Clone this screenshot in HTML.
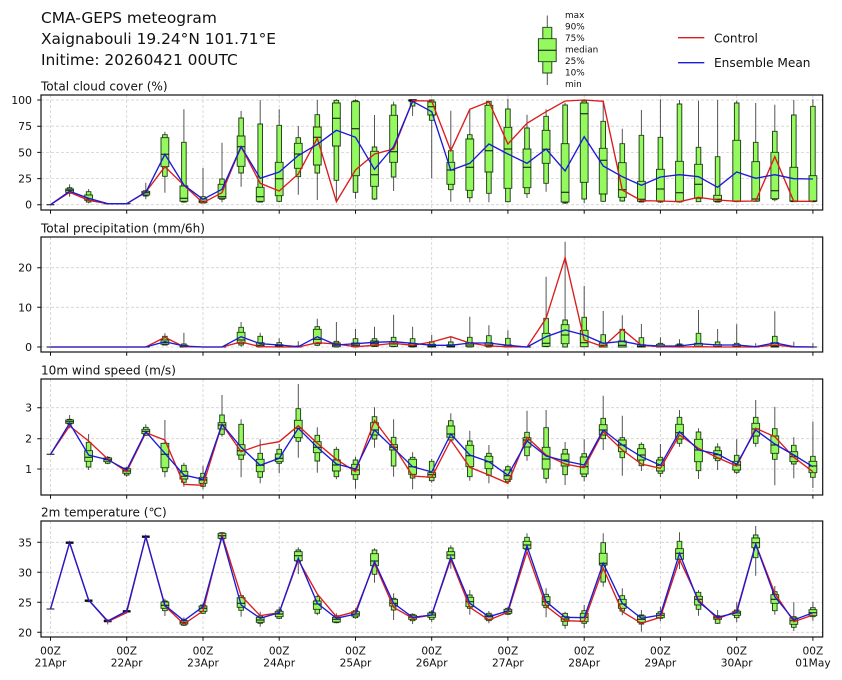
<!DOCTYPE html>
<html><head><meta charset="utf-8"><title>CMA-GEPS meteogram</title>
<style>
html,body{margin:0;padding:0;background:#fff;width:842px;height:680px;overflow:hidden}
svg{display:block}
text{font-family:"DejaVu Sans","Liberation Sans",sans-serif;fill:#111}
.g{stroke:#d0d0d0;stroke-width:.8;stroke-dasharray:3 2;fill:none}
.w{stroke:#2a2a2a;stroke-width:1;fill:none;stroke-opacity:.8}
.b{fill:#94f85f;stroke:#12280a;stroke-width:.95;stroke-opacity:.9}
.m{stroke:#0c0c0c;stroke-width:1;fill:none}
.k{stroke:#0c0c0c;stroke-width:2.4;fill:none}
.r{stroke:#dc1c1c;stroke-width:1.35;fill:none}
.l{stroke:#1a1ad8;stroke-width:1.35;fill:none}
.f{fill:none;stroke:#111;stroke-width:1.2}
.t{stroke:#111;stroke-width:1;fill:none}
.yl{font-size:10.9px;text-anchor:end}
.xl{font-size:10.6px;text-anchor:middle}
.pt{font-size:12.05px}
.mt{font-size:15.4px}
.sl{font-size:8.9px}
.lg{font-size:12.15px}
</style></head><body>
<svg width="842" height="680" viewBox="0 0 842 680" xmlns="http://www.w3.org/2000/svg">
<text class="mt" x="41" y="23">CMA-GEPS meteogram</text>
<text class="mt" x="41" y="44">Xaignabouli 19.24°N 101.71°E</text>
<text class="mt" x="41" y="65">Initime: 20260421 00UTC</text>

<!-- legend box -->
<path class="w" d="M547.3 15.5V85"/>
<path class="b" d="M542.8 27.3h9V73h-9z"/>
<path class="b" d="M538.4 38.7h17.8V61.7h-17.8z"/>
<path class="m" d="M538.4 50.3h17.8"/>
<text class="sl" x="565" y="18.2">max</text>
<text class="sl" x="565" y="29.7">90%</text>
<text class="sl" x="565" y="41.2">75%</text>
<text class="sl" x="565" y="52.7">median</text>
<text class="sl" x="565" y="64.2">25%</text>
<text class="sl" x="565" y="75.7">10%</text>
<text class="sl" x="565" y="87.2">min</text>
<path class="r" d="M678 37.7h26.3"/>
<path class="l" d="M678 62.7h26.3"/>
<text class="lg" x="714" y="42.3">Control</text>
<text class="lg" x="714" y="67">Ensemble Mean</text>

<!-- Panel 1 -->
<text class="pt" x="41" y="90.5">Total cloud cover (%)</text>
<path class="g" d="M50.5 95V210M126.7 95V210M203 95V210M279.2 95V210M355.5 95V210M431.7 95V210M507.9 95V210M584.2 95V210M660.4 95V210M736.7 95V210M812.9 95V210M41 204.7H823M41 178.6H823M41 152.4H823M41 126.2H823M41 100H823"/>
<path class="w" d="M69.6 184.3V196.7M88.6 189V203.3M145.8 182.7V199.3M164.9 131.7V192.7M183.9 109.3V202.7M203 168V203.3M222 142.7V202.3M241.1 111V186.7M260.2 100V202M279.2 109.3V202M298.3 126V194.7M317.3 100V200M336.4 99.3V200M355.5 99.3V198.7M374.5 115V200M393.6 101.7V191M412.6 100V116M431.7 99.3V178.3M450.8 110.7V201.7M469.8 110V202.3M488.9 100.7V202.3M507.9 98.7V202.3M527 114.7V198M546.1 109.3V191.7M565.1 102.7V204M584.2 99.3V203.3M603.2 100.7V201.7M622.3 128.7V201.7M641.4 110V202.3M660.4 99.3V202.7M679.5 100V202.7M698.5 100.7V202M717.6 100V202.3M736.7 100.7V202M755.7 103V201.7M774.8 104.7V201.3M793.8 100V202M812.9 99.3V202"/>
<path class="b" d="M67.3 187.7h4.6V193.3h-4.6zM86.3 191.7h4.6V202h-4.6zM143.5 190.7h4.6V196h-4.6zM162.6 134.7h4.6V176.3h-4.6zM181.6 142.3h4.6V202h-4.6zM200.7 196.7h4.6V203h-4.6zM219.7 179h4.6V199.3h-4.6zM238.8 118h4.6V173h-4.6zM257.9 124h4.6V202h-4.6zM276.9 125.3h4.6V201.3h-4.6zM296 137.7h4.6V176.7h-4.6zM315 114.7h4.6V173h-4.6zM334.1 100.3h4.6V180.3h-4.6zM353.2 100.7h4.6V192.3h-4.6zM372.2 147h4.6V199h-4.6zM391.3 105h4.6V177h-4.6zM410.3 100h4.6V106h-4.6zM429.4 100h4.6V120.3h-4.6zM448.5 150.7h4.6V189.7h-4.6zM467.5 134.7h4.6V197.7h-4.6zM486.6 101.3h4.6V193.3h-4.6zM505.6 109h4.6V201.7h-4.6zM524.7 128h4.6V193.7h-4.6zM543.8 116.3h4.6V183.3h-4.6zM562.8 105h4.6V203h-4.6zM581.9 101h4.6V199h-4.6zM600.9 121.3h4.6V201.3h-4.6zM620 143.7h4.6V201h-4.6zM639.1 135.3h4.6V202h-4.6zM658.1 137.3h4.6V202h-4.6zM677.2 104h4.6V202h-4.6zM696.2 147.3h4.6V201.7h-4.6zM715.3 156.7h4.6V202h-4.6zM734.4 103h4.6V201.7h-4.6zM753.4 142.3h4.6V201.3h-4.6zM772.5 131.3h4.6V199.7h-4.6zM791.5 115h4.6V201.7h-4.6zM810.6 106.3h4.6V201.7h-4.6z"/>
<path class="b" d="M65.7 189h7.8V192.3h-7.8zM84.7 195h7.8V200.3h-7.8zM141.9 191.3h7.8V195h-7.8zM161 137.7h7.8V166.7h-7.8zM180 186h7.8V201.3h-7.8zM199.1 199h7.8V202.7h-7.8zM218.1 184.3h7.8V198.3h-7.8zM237.2 136h7.8V166.3h-7.8zM256.3 187.3h7.8V201.3h-7.8zM275.3 162.3h7.8V195.7h-7.8zM294.4 143.3h7.8V168.3h-7.8zM313.4 127h7.8V165h-7.8zM332.5 103h7.8V146h-7.8zM351.6 101.7h7.8V175.7h-7.8zM370.6 151.3h7.8V186.3h-7.8zM389.7 115.3h7.8V162.3h-7.8zM408.7 100h7.8V101h-7.8zM427.8 102h7.8V115h-7.8zM446.9 162.3h7.8V184.3h-7.8zM465.9 139h7.8V190.3h-7.8zM485 105.3h7.8V172h-7.8zM504 127.3h7.8V188.3h-7.8zM523.1 149h7.8V187.7h-7.8zM542.2 130.3h7.8V163.3h-7.8zM561.2 143.7h7.8V202h-7.8zM580.3 103h7.8V182.3h-7.8zM599.3 148.3h7.8V194h-7.8zM618.4 162.7h7.8V197.3h-7.8zM637.5 181.3h7.8V201.3h-7.8zM656.5 169.3h7.8V201.3h-7.8zM675.6 161.3h7.8V201.3h-7.8zM694.6 164.3h7.8V198.3h-7.8zM713.7 195.3h7.8V201.3h-7.8zM732.8 140.3h7.8V201.3h-7.8zM751.8 161.7h7.8V201h-7.8zM770.9 152.3h7.8V198.7h-7.8zM789.9 167.3h7.8V201.3h-7.8zM809 175.7h7.8V201.3h-7.8z"/>
<path class="m" d="M46.6 204.7h7.8M65.7 190.3h7.8M84.7 199h7.8M103.8 203.7h7.8M122.8 203.7h7.8M141.9 192.7h7.8M161 154.3h7.8M180 198.3h7.8M199.1 201.3h7.8M218.1 196.7h7.8M237.2 146.7h7.8M256.3 196.7h7.8M275.3 178.7h7.8M294.4 154h7.8M313.4 137.3h7.8M332.5 118.3h7.8M351.6 128.7h7.8M370.6 174.7h7.8M389.7 151.7h7.8M408.7 100.3h7.8M427.8 106.7h7.8M446.9 170h7.8M465.9 167.3h7.8M485 150.7h7.8M504 149h7.8M523.1 167.3h7.8M542.2 149.3h7.8M561.2 192.3h7.8M580.3 113.7h7.8M599.3 160.3h7.8M618.4 189.7h7.8M637.5 199.3h7.8M656.5 189h7.8M675.6 192.7h7.8M694.6 184.3h7.8M713.7 199.3h7.8M732.8 201h7.8M751.8 199h7.8M770.9 190.7h7.8M789.9 201h7.8M809 201h7.8"/>
<path class="k" d="M408.7 100.4h7.8"/>
<polyline class="r" points="50.5,204.7 69.6,192.3 88.6,200.3 107.7,203.7 126.7,203.7 145.8,192 164.9,166.7 183.9,185.3 203,202.7 222,192.7 241.1,146.7 260.2,183.3 279.2,191 298.3,174 317.3,138.3 336.4,201.7 355.5,170 374.5,154 393.6,149 412.6,100.7 431.7,101 450.8,150.7 469.8,109.3 488.9,101.7 507.9,144 527,123.3 546.1,111.7 565.1,101 584.2,100 603.2,101.3 622.3,190 641.4,200.7 660.4,201 679.5,201.7 698.5,197.3 717.6,200 736.7,201.3 755.7,201 774.8,156.7 793.8,201.3 812.9,201.3"/>
<polyline class="l" points="50.5,204.7 69.6,191.3 88.6,198.3 107.7,203.7 126.7,203.7 145.8,192.3 164.9,154.3 183.9,185 203,199.3 222,189.3 241.1,146.7 260.2,178.3 279.2,172 298.3,155.5 317.3,144.3 336.4,130.3 355.5,137.3 374.5,169.3 393.6,146.7 412.6,101.3 431.7,111.7 450.8,170.3 469.8,163.3 488.9,144 507.9,154 527,163.3 546.1,149 565.1,171 584.2,136.7 603.2,166 622.3,176.7 641.4,185.3 660.4,177 679.5,174.7 698.5,176.7 717.6,187.3 736.7,172 755.7,178.3 774.8,174.7 793.8,178.7 812.9,179"/>
<rect class="f" x="41" y="95" width="781.7" height="115"/>
<path class="t" d="M50.5 210v3.8M126.7 210v3.8M203 210v3.8M279.2 210v3.8M355.5 210v3.8M431.7 210v3.8M507.9 210v3.8M584.2 210v3.8M660.4 210v3.8M736.7 210v3.8M812.9 210v3.8M41 204.7h-3.8M41 178.6h-3.8M41 152.4h-3.8M41 126.2h-3.8M41 100h-3.8"/>
<text class="yl" x="32" y="208.7">0</text><text class="yl" x="32" y="182.6">25</text><text class="yl" x="32" y="156.4">50</text><text class="yl" x="32" y="130.2">75</text><text class="yl" x="32" y="104">100</text>

<!-- Panel 2 -->
<text class="pt" x="41" y="232.3">Total precipitation (mm/6h)</text>
<path class="g" d="M50.5 237V352M126.7 237V352M203 237V352M279.2 237V352M355.5 237V352M431.7 237V352M507.9 237V352M584.2 237V352M660.4 237V352M736.7 237V352M812.9 237V352M41 347H823M41 307.3H823M41 267.7H823"/>
<path class="w" d="M164.9 333.3V345M183.9 332.7V347M241.1 322V346.7M260.2 332.7V347M279.2 338.3V347M298.3 341.3V347M317.3 318.7V346M336.4 322V347M355.5 329V347M374.5 326.7V346.5M393.6 314.7V347M412.6 326.7V347M431.7 335V347M450.8 336.7V347M469.8 316.7V347M488.9 325.3V347M507.9 330.3V347M546.1 276.7V347M565.1 241.7V347M584.2 286V347M603.2 311V347M622.3 315.3V347M641.4 324V347M660.4 337.3V347M679.5 339.3V347M698.5 310V347M717.6 329V347M736.7 324.3V347M755.7 343.3V347M774.8 311.3V347M793.8 341.7V347M812.9 343.3V347"/>
<path class="b" d="M162.6 336.3h4.6V345h-4.6zM181.6 344h4.6V347h-4.6zM238.8 327.3h4.6V345h-4.6zM257.9 336.3h4.6V347h-4.6zM276.9 342.7h4.6V347h-4.6zM296 346h4.6V347h-4.6zM315 326.7h4.6V345.3h-4.6zM334.1 341.3h4.6V347h-4.6zM353.2 338.7h4.6V347h-4.6zM372.2 338.7h4.6V346.5h-4.6zM391.3 337.3h4.6V346.7h-4.6zM410.3 338.7h4.6V347h-4.6zM429.4 341.7h4.6V347h-4.6zM448.5 342h4.6V347h-4.6zM467.5 337.3h4.6V347h-4.6zM486.6 335.7h4.6V347h-4.6zM505.6 338.3h4.6V347h-4.6zM543.8 318.3h4.6V346.7h-4.6zM562.8 320h4.6V347h-4.6zM581.9 317.3h4.6V346.7h-4.6zM600.9 334.7h4.6V347h-4.6zM620 329.3h4.6V347h-4.6zM639.1 337.7h4.6V347h-4.6zM658.1 343.3h4.6V347h-4.6zM677.2 344h4.6V347h-4.6zM696.2 333.3h4.6V346.7h-4.6zM715.3 342h4.6V347h-4.6zM734.4 343.3h4.6V347h-4.6zM772.5 336.3h4.6V347h-4.6z"/>
<path class="b" d="M161 340h7.8V344.3h-7.8zM180 345.3h7.8V347h-7.8zM237.2 332.3h7.8V343.3h-7.8zM256.3 342.7h7.8V346.7h-7.8zM275.3 344.7h7.8V347h-7.8zM313.4 329.3h7.8V343.7h-7.8zM332.5 343h7.8V346.7h-7.8zM351.6 343h7.8V346.7h-7.8zM370.6 341h7.8V346h-7.8zM389.7 341.7h7.8V346.3h-7.8zM408.7 343.7h7.8V346.7h-7.8zM427.8 344.3h7.8V347h-7.8zM446.9 344.7h7.8V347h-7.8zM465.9 342.7h7.8V346.7h-7.8zM485 342.7h7.8V346.3h-7.8zM504 345h7.8V347h-7.8zM542.2 333.3h7.8V346.3h-7.8zM561.2 324.7h7.8V343.7h-7.8zM580.3 330.3h7.8V346.7h-7.8zM599.3 343h7.8V347h-7.8zM618.4 341h7.8V347h-7.8zM637.5 344.7h7.8V347h-7.8zM656.5 344.3h7.8V347h-7.8zM675.6 345h7.8V347h-7.8zM694.6 343.3h7.8V346.7h-7.8zM713.7 344.7h7.8V346.7h-7.8zM732.8 344.7h7.8V347h-7.8zM770.9 342.7h7.8V347h-7.8z"/>
<path class="m" d="M46.6 347h7.8M65.7 347h7.8M84.7 347h7.8M103.8 347h7.8M122.8 347h7.8M141.9 347h7.8M161 342.7h7.8M180 346.7h7.8M199.1 347h7.8M218.1 347h7.8M237.2 340h7.8M256.3 345.3h7.8M275.3 346h7.8M294.4 346.7h7.8M313.4 339.3h7.8M332.5 345.3h7.8M351.6 345.3h7.8M370.6 343.7h7.8M389.7 344h7.8M408.7 346h7.8M427.8 346.3h7.8M446.9 346.3h7.8M465.9 345h7.8M485 345h7.8M504 346.3h7.8M523.1 347h7.8M542.2 343.3h7.8M561.2 335h7.8M580.3 342.7h7.8M599.3 345.3h7.8M618.4 345.3h7.8M637.5 346.3h7.8M656.5 346.7h7.8M675.6 346.7h7.8M694.6 346.3h7.8M713.7 346.5h7.8M732.8 346.5h7.8M751.8 347h7.8M770.9 346h7.8M789.9 347h7.8M809 347h7.8"/>
<polyline class="r" points="50.5,347 126.7,347 145.8,347 164.9,337.3 183.9,346.7 203,347 222,347 241.1,342 260.2,346.7 279.2,347 298.3,347 317.3,342.7 336.4,344 355.5,346.7 374.5,345.3 393.6,343.3 412.6,345.3 431.7,342 450.8,336.7 469.8,343 488.9,346 507.9,346.7 527,347 546.1,318.3 565.1,257.7 584.2,340 603.2,346.7 622.3,329.3 641.4,345.3 660.4,346.7 679.5,347 698.5,346.7 717.6,347 736.7,347 755.7,347 774.8,345 793.8,347 812.9,347"/>
<polyline class="l" points="50.5,347 126.7,347 145.8,347 164.9,341.7 183.9,346 203,347 222,347 241.1,336.7 260.2,343.7 279.2,345 298.3,346.7 317.3,336.7 336.4,345 355.5,343.7 374.5,342.3 393.6,341.7 412.6,343.3 431.7,345.3 450.8,345.3 469.8,343 488.9,343 507.9,345.3 527,347 546.1,336.7 565.1,330 584.2,335 603.2,343.3 622.3,341.3 641.4,345 660.4,346 679.5,346 698.5,343.7 717.6,345 736.7,345 755.7,346.7 774.8,343 793.8,346.7 812.9,347"/>
<rect class="f" x="41" y="237" width="781.7" height="115"/>
<path class="t" d="M50.5 352v3.8M126.7 352v3.8M203 352v3.8M279.2 352v3.8M355.5 352v3.8M431.7 352v3.8M507.9 352v3.8M584.2 352v3.8M660.4 352v3.8M736.7 352v3.8M812.9 352v3.8M41 347h-3.8M41 307.3h-3.8M41 267.7h-3.8"/>
<text class="yl" x="32" y="351">0</text><text class="yl" x="32" y="311.3">10</text><text class="yl" x="32" y="271.7">20</text>

<!-- Panel 3 -->
<text class="pt" x="41" y="374.3">10m wind speed (m/s)</text>
<path class="g" d="M50.5 379V495M126.7 379V495M203 379V495M279.2 379V495M355.5 379V495M431.7 379V495M507.9 379V495M584.2 379V495M660.4 379V495M736.7 379V495M812.9 379V495M41 469H823M41 438.7H823M41 407.7H823"/>
<path class="w" d="M69.6 415V428.3M88.6 434V470M107.7 456V464.3M126.7 466.7V476.7M145.8 424.3V436M164.9 420V477.3M183.9 462.7V486.7M203 465.7V489.3M222 395V436.7M241.1 419.3V477.3M260.2 439.3V483.3M279.2 444V473.3M298.3 384V457.7M317.3 427.3V472.7M336.4 446.7V479.3M355.5 456.7V488.7M374.5 407.3V447.7M393.6 419.3V476.7M412.6 452.3V489.3M431.7 458.7V482.7M450.8 413.3V440M469.8 430.7V480.7M488.9 445V483.3M507.9 464.7V484M527 410.7V460.7M546.1 410V483.3M565.1 442V485M584.2 439.3V481.3M603.2 395.7V450M622.3 415.7V475.7M641.4 442.3V471M660.4 444V477.3M679.5 410V446.7M698.5 428.3V479M717.6 443.3V470M736.7 439.3V474M755.7 400V446.7M774.8 406.7V485.3M793.8 437.3V478.3M812.9 421.7V488"/>
<path class="b" d="M67.3 419.3h4.6V424h-4.6zM86.3 442.3h4.6V467h-4.6zM105.4 457.3h4.6V463.3h-4.6zM124.4 468h4.6V475h-4.6zM143.5 427.3h4.6V435.3h-4.6zM162.6 443.3h4.6V471.7h-4.6zM181.6 465.3h4.6V482.3h-4.6zM200.7 473.3h4.6V486.3h-4.6zM219.7 415h4.6V434.3h-4.6zM238.8 424.3h4.6V459.3h-4.6zM257.9 453.3h4.6V477.3h-4.6zM276.9 449.3h4.6V463.3h-4.6zM296 408.7h4.6V441.3h-4.6zM315 435.3h4.6V461h-4.6zM334.1 449.3h4.6V476.7h-4.6zM353.2 460h4.6V479.3h-4.6zM372.2 416.7h4.6V439h-4.6zM391.3 437.3h4.6V466h-4.6zM410.3 457.3h4.6V478h-4.6zM429.4 461.3h4.6V480.7h-4.6zM448.5 420.7h4.6V440h-4.6zM467.5 441h4.6V476.7h-4.6zM486.6 453.3h4.6V475.3h-4.6zM505.6 466.7h4.6V481.7h-4.6zM524.7 432.3h4.6V455.7h-4.6zM543.8 427.7h4.6V478.3h-4.6zM562.8 449.3h4.6V474.7h-4.6zM581.9 453.7h4.6V476.7h-4.6zM600.9 418.3h4.6V438.7h-4.6zM620 437.7h4.6V457.7h-4.6zM639.1 444.3h4.6V465.7h-4.6zM658.1 457.3h4.6V473.3h-4.6zM677.2 417.3h4.6V443.3h-4.6zM696.2 432h4.6V470.7h-4.6zM715.3 447h4.6V460.7h-4.6zM734.4 455.3h4.6V472.3h-4.6zM753.4 417.3h4.6V443.3h-4.6zM772.5 428.7h4.6V459.3h-4.6zM791.5 445.3h4.6V464h-4.6zM810.6 456.3h4.6V477.3h-4.6z"/>
<path class="b" d="M65.7 420h7.8V423.3h-7.8zM84.7 450.7h7.8V461.3h-7.8zM103.8 458h7.8V461.7h-7.8zM122.8 468.7h7.8V473.3h-7.8zM141.9 429.3h7.8V433.7h-7.8zM161 443.3h7.8V467.7h-7.8zM180 471.3h7.8V479h-7.8zM199.1 477.3h7.8V483.3h-7.8zM218.1 422.7h7.8V429h-7.8zM237.2 444.7h7.8V455h-7.8zM256.3 459.3h7.8V471.7h-7.8zM275.3 454h7.8V461.7h-7.8zM294.4 420.3h7.8V437.7h-7.8zM313.4 441.7h7.8V452.7h-7.8zM332.5 460h7.8V471h-7.8zM351.6 464.3h7.8V474.7h-7.8zM370.6 422.7h7.8V435h-7.8zM389.7 444.7h7.8V450h-7.8zM408.7 459.3h7.8V474.3h-7.8zM427.8 472.7h7.8V477.3h-7.8zM446.9 426h7.8V437.3h-7.8zM465.9 445.3h7.8V466.7h-7.8zM485 456.3h7.8V468.7h-7.8zM504 470h7.8V479.3h-7.8zM523.1 437.7h7.8V447h-7.8zM542.2 447.3h7.8V469h-7.8zM561.2 454h7.8V466h-7.8zM580.3 457h7.8V474h-7.8zM599.3 424.7h7.8V435h-7.8zM618.4 440h7.8V451.7h-7.8zM637.5 448.7h7.8V460h-7.8zM656.5 460h7.8V471h-7.8zM675.6 424.3h7.8V439h-7.8zM694.6 439.3h7.8V461.7h-7.8zM713.7 450.7h7.8V458.3h-7.8zM732.8 461.3h7.8V470h-7.8zM751.8 423.3h7.8V436h-7.8zM770.9 436h7.8V453.3h-7.8zM789.9 451.7h7.8V461.7h-7.8zM809 461.3h7.8V472.7h-7.8z"/>
<path class="m" d="M46.6 454.3h7.8M65.7 421.7h7.8M84.7 457.3h7.8M103.8 459.7h7.8M122.8 471h7.8M141.9 431.3h7.8M161 454.3h7.8M180 476.3h7.8M199.1 480h7.8M218.1 425h7.8M237.2 450.7h7.8M256.3 465.3h7.8M275.3 458.3h7.8M294.4 428.3h7.8M313.4 447.3h7.8M332.5 465h7.8M351.6 470h7.8M370.6 430h7.8M389.7 447.3h7.8M408.7 466.7h7.8M427.8 474.7h7.8M446.9 434h7.8M465.9 455.7h7.8M485 461.7h7.8M504 475.7h7.8M523.1 440h7.8M542.2 459h7.8M561.2 460h7.8M580.3 466.7h7.8M599.3 430h7.8M618.4 445h7.8M637.5 455h7.8M656.5 465.3h7.8M675.6 432.7h7.8M694.6 450h7.8M713.7 454.7h7.8M732.8 465h7.8M751.8 429h7.8M770.9 445h7.8M789.9 456.7h7.8M809 466h7.8"/>
<polyline class="r" points="50.5,454.3 69.6,426 88.6,441 107.7,459 126.7,471.7 145.8,432.7 164.9,440 183.9,484.3 203,485.3 222,424.3 241.1,451.7 260.2,445 279.2,441.7 298.3,425.7 317.3,443.3 336.4,459.3 355.5,471.7 374.5,420.7 393.6,446 412.6,476 431.7,477.3 450.8,440 469.8,467.3 488.9,475 507.9,483.3 527,437.3 546.1,455 565.1,464 584.2,467.7 603.2,431.7 622.3,450 641.4,464 660.4,468.3 679.5,435 698.5,448.3 717.6,457.7 736.7,466 755.7,428.3 774.8,436.7 793.8,457.3 812.9,471.7"/>
<polyline class="l" points="50.5,454.3 69.6,423.3 88.6,455 107.7,459.7 126.7,470 145.8,431.7 164.9,453.3 183.9,475 203,479.3 222,424.3 241.1,447.3 260.2,465.3 279.2,458.3 298.3,428.3 317.3,447.3 336.4,464 355.5,469 374.5,430 393.6,448.3 412.6,466.7 431.7,472 450.8,434 469.8,455 488.9,461.7 507.9,475.3 527,441 546.1,456 565.1,461 584.2,465 603.2,430 622.3,445 641.4,456.7 660.4,465.3 679.5,431.7 698.5,450 717.6,454 736.7,464.3 755.7,430 774.8,444 793.8,455 812.9,466.7"/>
<rect class="f" x="41" y="379" width="781.7" height="116"/>
<path class="t" d="M50.5 495v3.8M126.7 495v3.8M203 495v3.8M279.2 495v3.8M355.5 495v3.8M431.7 495v3.8M507.9 495v3.8M584.2 495v3.8M660.4 495v3.8M736.7 495v3.8M812.9 495v3.8M41 469h-3.8M41 438.7h-3.8M41 407.7h-3.8"/>
<text class="yl" x="32" y="473">1</text><text class="yl" x="32" y="442.7">2</text><text class="yl" x="32" y="411.7">3</text>

<!-- Panel 4 -->
<text class="pt" x="41" y="516.7">2m temperature (℃)</text>
<path class="g" d="M50.5 521V637M126.7 521V637M203 521V637M279.2 521V637M355.5 521V637M431.7 521V637M507.9 521V637M584.2 521V637M660.4 521V637M736.7 521V637M812.9 521V637M41 632.3H823M41 602.3H823M41 572.3H823M41 542.3H823"/>
<path class="w" d="M69.6 541.3V544M88.6 599.3V602.3M107.7 619.3V624.5M126.7 608.3V613.3M145.8 535.3V537.7M164.9 598.7V616M183.9 617.3V626M203 603.3V614M222 532V539.3M241.1 594.7V616.7M260.2 611.7V626.7M279.2 606.7V619.3M298.3 547.3V574M317.3 594.7V615.3M336.4 613.3V623.3M355.5 608.3V618.7M374.5 548.3V582.7M393.6 593.3V620M412.6 613.3V624M431.7 610V622M450.8 545.3V568.7M469.8 590V614.7M488.9 611V623.3M507.9 606.7V615.3M527 533.3V552.7M546.1 588.3V617.3M565.1 611.7V628.7M584.2 605V628M603.2 533.3V586.7M622.3 588.3V615.3M641.4 610V631.7M660.4 606.7V621.3M679.5 532.3V569M698.5 590V615.7M717.6 610V624M736.7 602.3V622.3M755.7 526V575.7M774.8 586V614.7M793.8 602.3V631M812.9 601.7V620.7"/>
<path class="b" d="M162.6 601h4.6V610.7h-4.6zM181.6 619.3h4.6V625.3h-4.6zM200.7 605h4.6V613.3h-4.6zM219.7 532.7h4.6V539h-4.6zM238.8 595.7h4.6V610.3h-4.6zM257.9 616h4.6V623.3h-4.6zM276.9 610h4.6V618.3h-4.6zM296 550h4.6V561.7h-4.6zM315 596.7h4.6V613.3h-4.6zM334.1 615.7h4.6V622.7h-4.6zM353.2 610.7h4.6V617.7h-4.6zM372.2 550h4.6V574.3h-4.6zM391.3 598.3h4.6V610h-4.6zM410.3 614.3h4.6V620.7h-4.6zM429.4 612h4.6V619.3h-4.6zM448.5 548h4.6V558.7h-4.6zM467.5 595h4.6V608.3h-4.6zM486.6 613.3h4.6V620.7h-4.6zM505.6 608.3h4.6V614.3h-4.6zM524.7 537.3h4.6V549.3h-4.6zM543.8 594.3h4.6V607.7h-4.6zM562.8 613.3h4.6V625.3h-4.6zM581.9 610.7h4.6V623.3h-4.6zM600.9 542.7h4.6V582h-4.6zM620 595.7h4.6V611h-4.6zM639.1 615h4.6V624h-4.6zM658.1 611.7h4.6V618.3h-4.6zM677.2 541.3h4.6V559.3h-4.6zM696.2 592.3h4.6V609.3h-4.6zM715.3 615.7h4.6V623.3h-4.6zM734.4 610h4.6V617.7h-4.6zM753.4 535h4.6V557.7h-4.6zM772.5 591.7h4.6V610.7h-4.6zM791.5 616.7h4.6V627.3h-4.6zM810.6 607.7h4.6V616.7h-4.6z"/>
<path class="b" d="M161 602h7.8V608.3h-7.8zM180 620.7h7.8V624h-7.8zM199.1 606h7.8V611.3h-7.8zM218.1 533.3h7.8V538.3h-7.8zM237.2 597.7h7.8V607.3h-7.8zM256.3 617.3h7.8V622.3h-7.8zM275.3 611.3h7.8V616.7h-7.8zM294.4 551.7h7.8V560.7h-7.8zM313.4 601h7.8V609.3h-7.8zM332.5 617.3h7.8V622h-7.8zM351.6 611.7h7.8V616h-7.8zM370.6 553.7h7.8V565.7h-7.8zM389.7 599.3h7.8V606h-7.8zM408.7 615.3h7.8V619.3h-7.8zM427.8 613h7.8V617.3h-7.8zM446.9 551.7h7.8V558.7h-7.8zM465.9 597.3h7.8V606.7h-7.8zM485 615h7.8V619.3h-7.8zM504 609.3h7.8V613.3h-7.8zM523.1 541.3h7.8V548.7h-7.8zM542.2 596.7h7.8V605.3h-7.8zM561.2 616.7h7.8V621.3h-7.8zM580.3 613.3h7.8V621.7h-7.8zM599.3 553.3h7.8V565h-7.8zM618.4 599.3h7.8V608.3h-7.8zM637.5 616h7.8V622.3h-7.8zM656.5 613.3h7.8V617.7h-7.8zM675.6 548.7h7.8V559.3h-7.8zM694.6 596.3h7.8V605h-7.8zM713.7 616.3h7.8V619.3h-7.8zM732.8 611.3h7.8V615.3h-7.8zM751.8 538h7.8V547.7h-7.8zM770.9 594.7h7.8V603.3h-7.8zM789.9 618h7.8V624.3h-7.8zM809 609.7h7.8V615.7h-7.8z"/>
<path class="m" d="M46.6 609h7.8M161 605.3h7.8M180 622.3h7.8M199.1 608.3h7.8M218.1 535.7h7.8M237.2 603.3h7.8M256.3 620h7.8M275.3 614h7.8M294.4 555.7h7.8M313.4 604h7.8M332.5 619.3h7.8M351.6 614h7.8M370.6 561h7.8M389.7 603.3h7.8M408.7 617.3h7.8M427.8 615h7.8M446.9 555h7.8M465.9 601.7h7.8M485 616.7h7.8M504 611.3h7.8M523.1 545h7.8M542.2 601.7h7.8M561.2 619h7.8M580.3 617.3h7.8M599.3 563.3h7.8M618.4 604h7.8M637.5 619.3h7.8M656.5 615.3h7.8M675.6 553.3h7.8M694.6 599.3h7.8M713.7 617.7h7.8M732.8 613h7.8M751.8 542.7h7.8M770.9 599.3h7.8M789.9 620.7h7.8M809 612.7h7.8"/>
<path class="k" d="M65.7 542.7h7.8M84.7 600.7h7.8M103.8 621h7.8M122.8 611.3h7.8M141.9 536.7h7.8"/>
<polyline class="r" points="50.5,609 69.6,542.7 88.6,600 107.7,621.7 126.7,612.7 145.8,536.7 164.9,606 183.9,624 203,611 222,535 241.1,595.7 260.2,615.7 279.2,612.7 298.3,560 317.3,594 336.4,616.7 355.5,611.7 374.5,563.3 393.6,607.3 412.6,618.3 431.7,615 450.8,559.3 469.8,607.3 488.9,620 507.9,612.3 527,551.7 546.1,606 565.1,620.7 584.2,621.3 603.2,568.3 622.3,611.7 641.4,623.3 660.4,617.3 679.5,559.3 698.5,600 717.6,619 736.7,611 755.7,544 774.8,593.3 793.8,621.7 812.9,615"/>
<polyline class="l" points="50.5,609 69.6,542.7 88.6,600 107.7,621 126.7,611 145.8,536.7 164.9,605.3 183.9,620.7 203,606.7 222,536.7 241.1,605 260.2,618.3 279.2,612.7 298.3,558.3 317.3,603.3 336.4,618.3 355.5,614 374.5,561.7 393.6,603.3 412.6,617.3 431.7,615 450.8,557.3 469.8,603.3 488.9,616.7 507.9,611 527,546 546.1,601.7 565.1,617.3 584.2,617.7 603.2,563.3 622.3,603.3 641.4,618.3 660.4,615 679.5,553.3 698.5,601.7 717.6,617.3 736.7,612.7 755.7,544.3 774.8,596.7 793.8,620 812.9,612.7"/>
<rect class="f" x="41" y="521" width="781.7" height="116"/>
<path class="t" d="M50.5 637v3.8M126.7 637v3.8M203 637v3.8M279.2 637v3.8M355.5 637v3.8M431.7 637v3.8M507.9 637v3.8M584.2 637v3.8M660.4 637v3.8M736.7 637v3.8M812.9 637v3.8M41 632.3h-3.8M41 602.3h-3.8M41 572.3h-3.8M41 542.3h-3.8"/>
<text class="yl" x="32" y="636.3">20</text><text class="yl" x="32" y="606.3">25</text><text class="yl" x="32" y="576.3">30</text><text class="yl" x="32" y="546.3">35</text>

<g>
<text class="xl" x="50.5" y="654.3">00Z</text><text class="xl" x="50.5" y="666.7">21Apr</text>
<text class="xl" x="126.7" y="654.3">00Z</text><text class="xl" x="126.7" y="666.7">22Apr</text>
<text class="xl" x="203" y="654.3">00Z</text><text class="xl" x="203" y="666.7">23Apr</text>
<text class="xl" x="279.2" y="654.3">00Z</text><text class="xl" x="279.2" y="666.7">24Apr</text>
<text class="xl" x="355.5" y="654.3">00Z</text><text class="xl" x="355.5" y="666.7">25Apr</text>
<text class="xl" x="431.7" y="654.3">00Z</text><text class="xl" x="431.7" y="666.7">26Apr</text>
<text class="xl" x="507.9" y="654.3">00Z</text><text class="xl" x="507.9" y="666.7">27Apr</text>
<text class="xl" x="584.2" y="654.3">00Z</text><text class="xl" x="584.2" y="666.7">28Apr</text>
<text class="xl" x="660.4" y="654.3">00Z</text><text class="xl" x="660.4" y="666.7">29Apr</text>
<text class="xl" x="736.7" y="654.3">00Z</text><text class="xl" x="736.7" y="666.7">30Apr</text>
<text class="xl" x="812.9" y="654.3">00Z</text><text class="xl" x="812.9" y="666.7">01May</text>
</g>
</svg>
</body></html>
